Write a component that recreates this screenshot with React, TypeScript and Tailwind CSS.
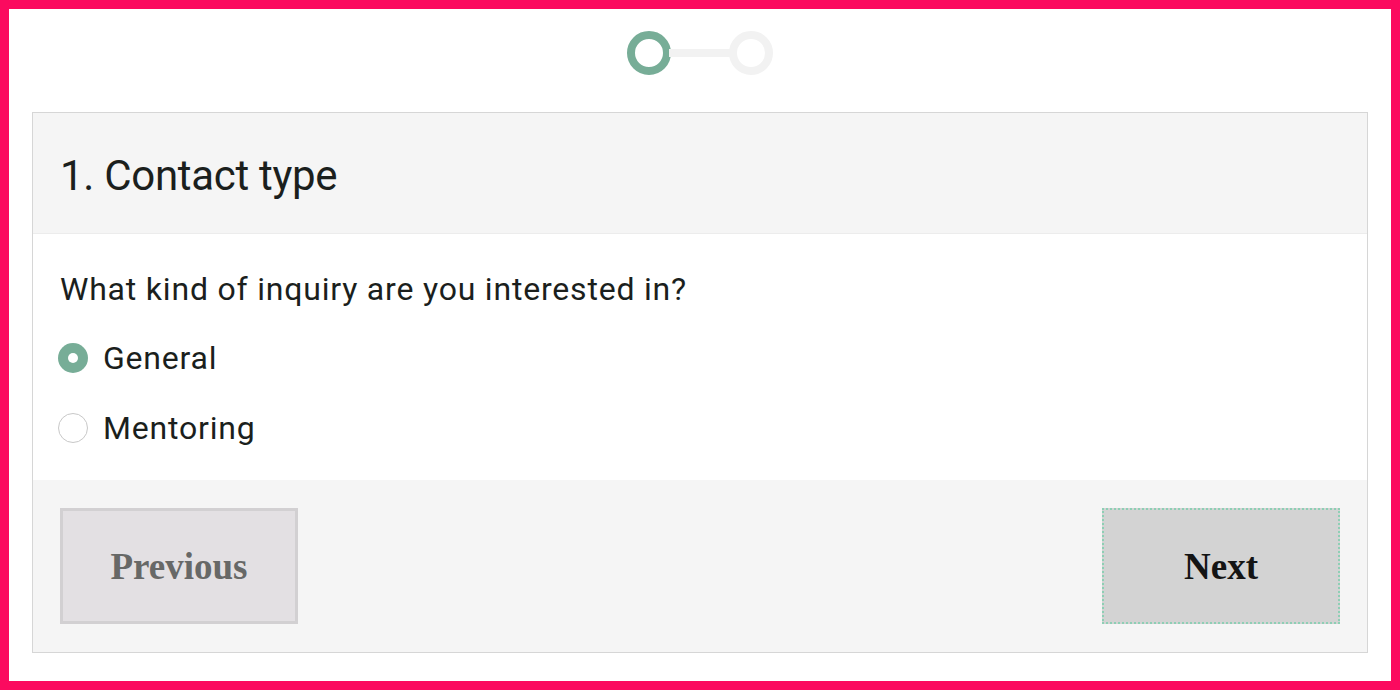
import React from "react";

export default function App() {
  return (
    <div className="w-[1400px] h-[690px] border-[9px] border-[#fb0a5f] bg-white box-border overflow-hidden" style={{ fontFamily: "Roboto, 'Noto Sans', sans-serif" }}>
      <div className="flex justify-center pt-[22px] h-[103px] items-start">
        <div className="flex items-center">
          <div className="w-[44px] h-[44px] rounded-full border-[8px] border-[#77ad97]" />
          <div className="w-[62px] h-[8px] bg-[#f2f2f2] -mx-[2px]" />
          <div className="w-[44px] h-[44px] rounded-full border-[8px] border-[#f2f2f2]" />
        </div>
      </div>
      <div className="mx-[23px] border border-[#d6d6d6] flex flex-col">
        <div className="h-[121px] bg-[#f5f5f5] border-b border-[#ececec] flex items-center px-[27px]">
          <h1 className="text-[42px] leading-[50px] text-[#1b1f1d] tracking-[-0.3px] pt-[6px]">1. Contact type</h1>
        </div>
        <div className="h-[246px] px-[27px] pt-[35px] flex flex-col">
          <p className="text-[32px] leading-[40px] tracking-[0.8px] text-[#1b1f1d]">What kind of inquiry are you interested in?</p>
          <div className="flex flex-col gap-[30px] mt-[29px]">
            <label className="flex items-center h-[40px]">
              <span className="w-[30px] h-[30px] rounded-full bg-[#77ad97] flex items-center justify-center -ml-[2px]">
                <span className="w-[10px] h-[10px] rounded-full bg-white" />
              </span>
              <span className="ml-[15px] text-[32px] tracking-[0.8px] text-[#1b1f1d]">General</span>
            </label>
            <label className="flex items-center h-[40px]">
              <span className="w-[30px] h-[30px] rounded-full border border-[#c8c8c8] bg-white -ml-[2px]" />
              <span className="ml-[15px] text-[32px] tracking-[0.8px] text-[#1b1f1d]">Mentoring</span>
            </label>
          </div>
        </div>
        <div className="h-[172px] bg-[#f5f5f5] flex items-center justify-between px-[27px]">
          <button className="w-[238px] h-[116px] bg-[#e3e0e3] border-[3px] border-[#d2d0d2] text-[37px] font-bold text-[#676867] pt-[2px]" style={{ fontFamily: "'Liberation Serif', serif" }}>Previous</button>
          <button className="w-[238px] h-[116px] bg-[#d3d3d3] border-[2px] border-dotted border-[#8ecfb5] text-[37px] font-bold text-[#141414] pt-[2px]" style={{ fontFamily: "'Liberation Serif', serif" }}>Next</button>
        </div>
      </div>
    </div>
  );
}
